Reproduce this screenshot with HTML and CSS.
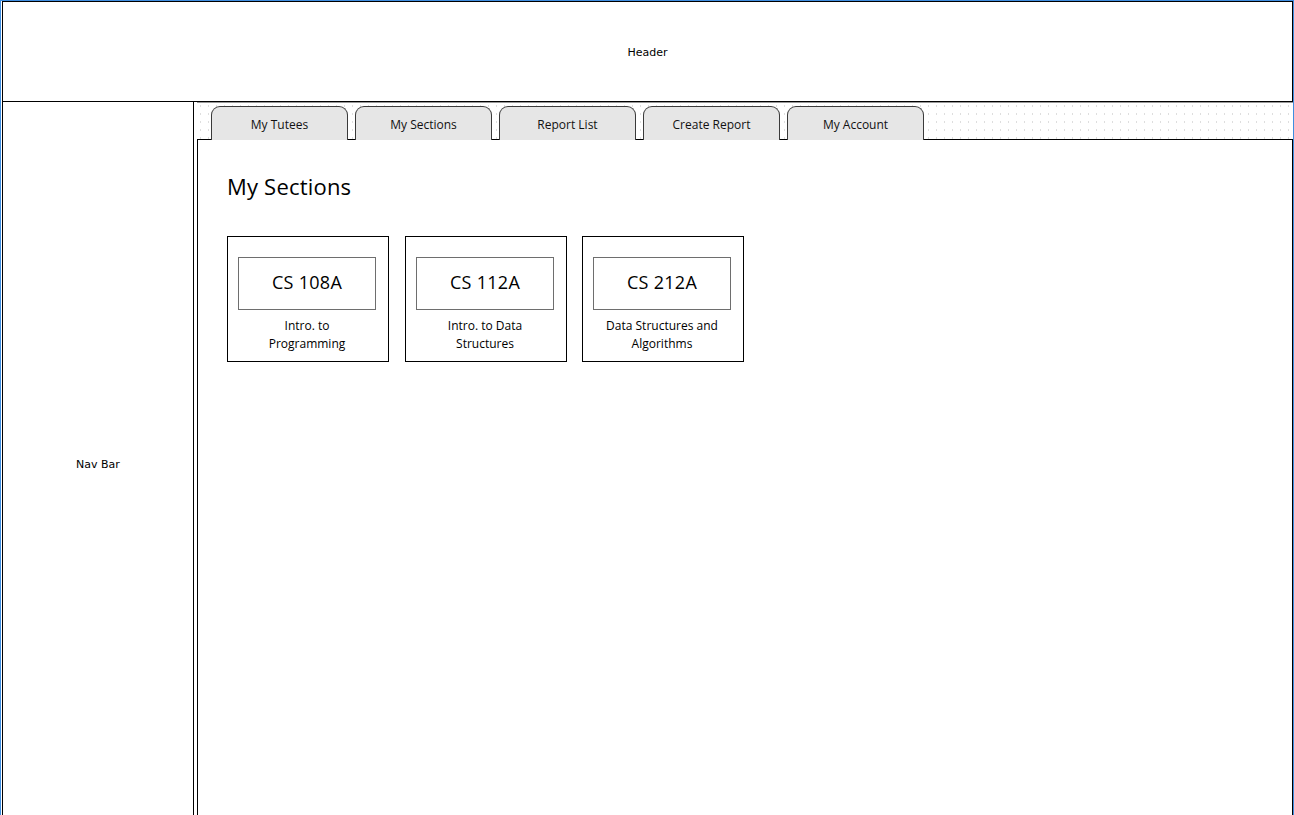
FILE: index.html
```html
<!DOCTYPE html>
<html lang="en">
<head>
<meta charset="utf-8">
<title>My Sections</title>
<link rel="stylesheet" href="styles.css">
</head>
<body>
<div class="window">
  <header class="header">Header</header>
  <div class="body-row">
    <nav class="nav">Nav Bar</nav>
    <main class="main">
      <div class="tabstrip">
        <div class="tab">My Tutees</div>
        <div class="tab">My Sections</div>
        <div class="tab">Report List</div>
        <div class="tab">Create Report</div>
        <div class="tab">My Account</div>
      </div>
      <section class="panel">
        <h1 class="title">My Sections</h1>
        <div class="cards">
          <div class="card">
            <div class="code">CS 108A</div>
            <div class="desc">Intro. to<br>Programming</div>
          </div>
          <div class="card">
            <div class="code">CS 112A</div>
            <div class="desc">Intro. to Data<br>Structures</div>
          </div>
          <div class="card">
            <div class="code">CS 212A</div>
            <div class="desc">Data Structures and<br>Algorithms</div>
          </div>
        </div>
      </section>
    </main>
  </div>
</div>
</body>
</html>
```
FILE: styles.css
```css
* { box-sizing: border-box; }
html, body {
  margin: 0;
  padding: 0;
  background: #ffffff;
  overflow: hidden;
}
.window {
  width: 1294px;
  height: 815px;
  border-top: 1px solid #3f8ee0;
  border-left: 1px solid #3f8ee0;
  border-right: 1px solid #3f8ee0;
  padding-left: 1px;
  display: flex;
  flex-direction: column;
  font-family: "DejaVu Sans", "Liberation Sans", sans-serif;
  color: #000;
}
.header {
  height: 101px;
  border: 1px solid #000;
  display: flex;
  align-items: center;
  justify-content: center;
  padding-top: 2px;
  font-size: 11px;
  flex: none;
}
.body-row {
  flex: 1;
  display: flex;
  min-height: 0;
}
.nav {
  width: 192px;
  border-left: 1px solid #000;
  border-right: 1px solid #000;
  display: flex;
  align-items: center;
  justify-content: center;
  font-size: 11px;
  padding-top: 11px;
  flex: none;
}
.main {
  flex: 1;
  display: flex;
  flex-direction: column;
  min-width: 0;
}
.tabstrip {
  height: 37px;
  margin-left: 3px;
  padding-left: 14px;
  padding-top: 3px;
  display: flex;
  gap: 7px;
  align-items: flex-end;
  border-top: 1px solid #9a9a9a;
  background-color: #fff;
  background-image:
    linear-gradient(to right, #fff 0, #fff 7px, transparent 7px),
    linear-gradient(to bottom, #dedede 0, #dedede 2px, transparent 2px);
  background-size: 8px 8px, 8px 8px;
  background-position: 4px 2px, 4px 2px;
  flex: none;
}
.tab {
  width: 137px;
  height: 34px;
  margin-bottom: -1px;
  background: #e6e6e6;
  border: 1px solid #3a3a3a;
  border-bottom: none;
  border-radius: 9px 9px 0 0;
  display: flex;
  align-items: center;
  justify-content: center;
  padding-top: 1px;
  font-family: "Open Sans", "Lato", sans-serif;
  font-size: 12px;
  color: #111;
  position: relative;
  z-index: 1;
}
.panel {
  flex: 1;
  margin-left: 3px;
  border: 1px solid #000;
  border-bottom: none;
  padding: 31px 29px 0;
  font-family: "Open Sans", "Lato", sans-serif;
}
.title {
  margin: 0;
  font-size: 22px;
  font-weight: 400;
  line-height: 30px;
  letter-spacing: 0.2px;
}
.cards {
  display: flex;
  gap: 16px;
  margin-top: 35px;
}
.card {
  width: 162px;
  height: 126px;
  border: 1px solid #000;
  padding: 20px 12px 0 10px;
  display: flex;
  flex-direction: column;
  align-items: center;
}
.card + .card + .card { margin-left: -1px; }
.code {
  width: 138px;
  height: 53px;
  border: 1.5px solid #6e6e6e;
  display: flex;
  align-items: center;
  justify-content: center;
  padding-bottom: 3px;
  font-size: 18px;
  letter-spacing: 0.3px;
}
.desc {
  margin-top: 7px;
  text-align: center;
  font-size: 12px;
  line-height: 18px;
}
```
